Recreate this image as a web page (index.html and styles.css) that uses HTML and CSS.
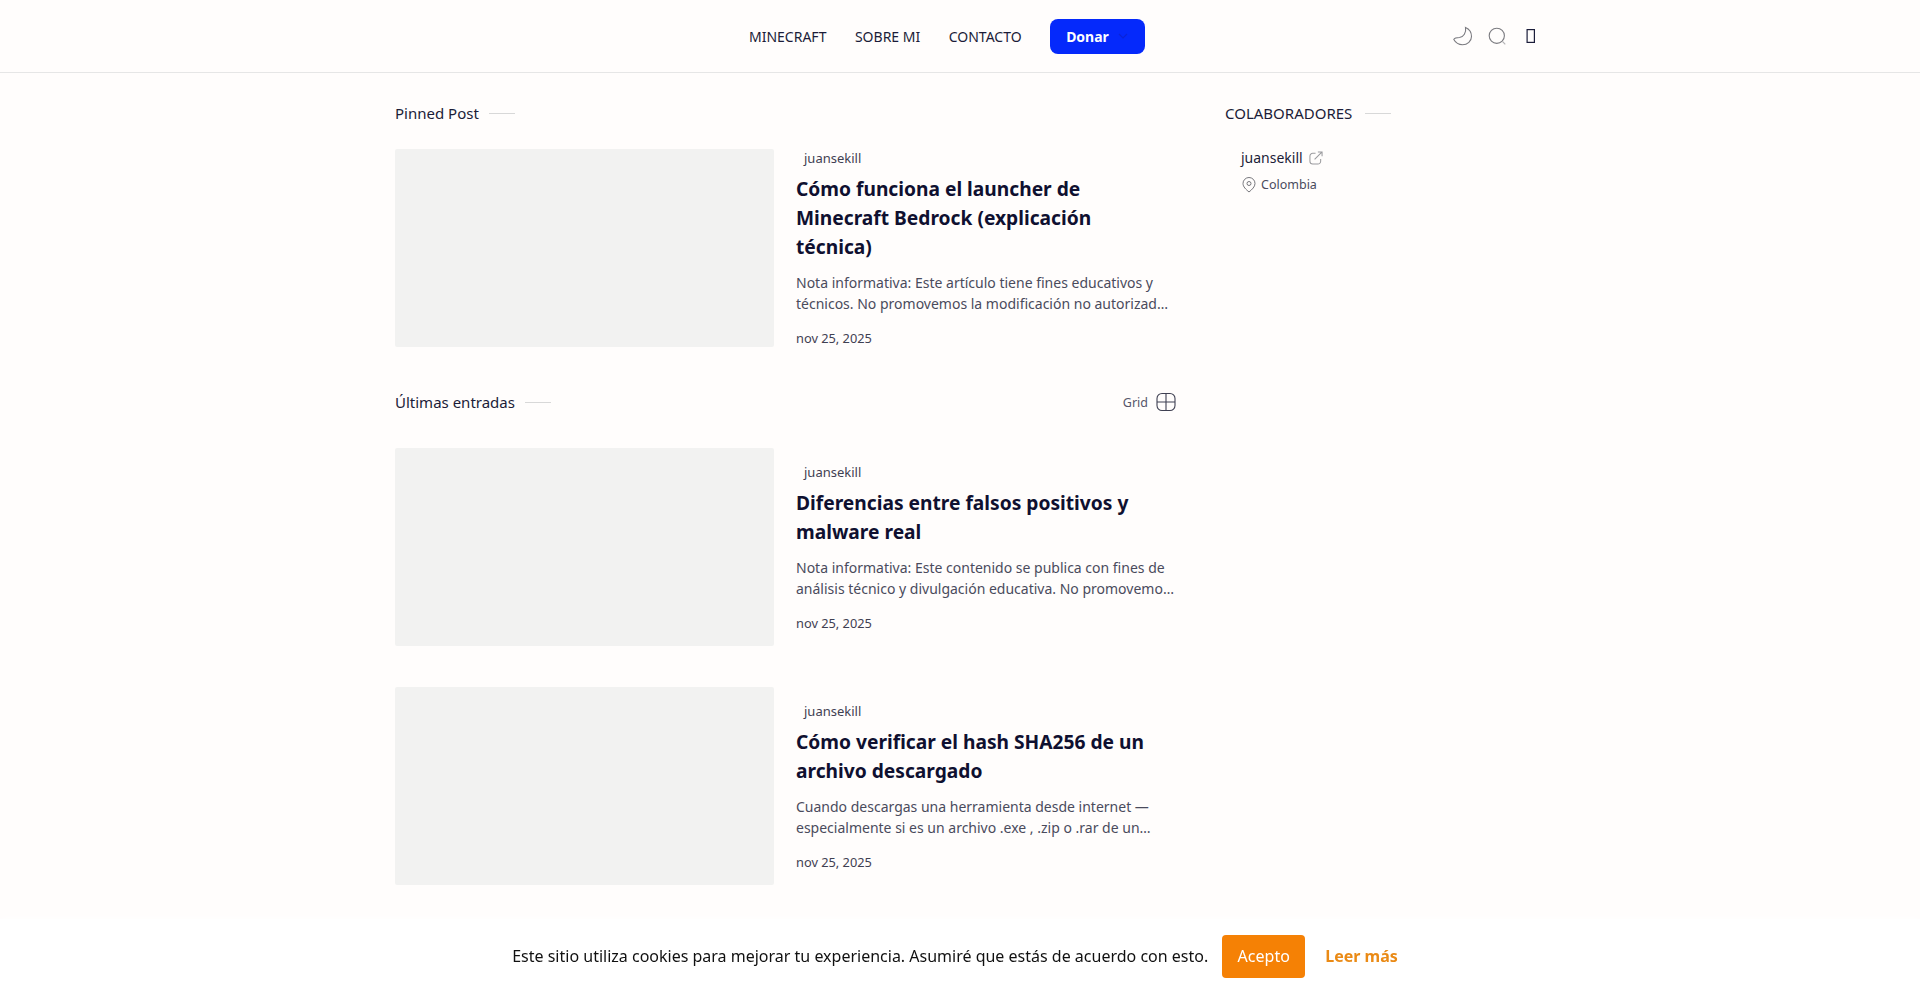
FILE: index.html
```html
<!DOCTYPE html>
<html lang="es">
<head>
  <meta charset="UTF-8">
  <meta name="viewport" content="width=device-width, initial-scale=1.0">
  <title>Juansekill</title>
  <link rel="stylesheet" href="styles.css">
</head>
<body>
  <header class="topbar">
    <nav class="nav">
      <a class="nav-link" href="#">MINECRAFT</a>
      <a class="nav-link" href="#">SOBRE MI</a>
      <a class="nav-link" href="#">CONTACTO</a>
      <a class="donate" href="#">Donar
        <svg class="donate-arrow" width="12" height="12" viewBox="0 0 12 12" fill="none" stroke="#0a23d8" stroke-width="1.2"><path d="M2 4l4 4 4-4"/></svg>
      </a>
    </nav>
    <div class="tools">
      <svg class="tool" width="20" height="20" viewBox="0 0 20 20" fill="none" stroke="#7b7b80" stroke-width="1.1"><path d="M12.500 1.500C16 3 18.500 6.500 18.500 10.500 18.500 15 14.500 18.700 9.500 18.700 6 18.700 2.500 16.500.8 13.500 1.500 12 4 11.500 6.500 11.500 10.500 11 13.500 6.500 12.500 1.500z"/></svg>
      <svg class="tool" width="20" height="20" viewBox="0 0 20 20" fill="none" stroke="#7b7b80" stroke-width="1.1"><circle cx="9.800" cy="9.800" r="7.600"/><path d="M15.500 15.500l2.800 2.800" stroke="#b4b4b6"/></svg>
      <svg class="tool" width="20" height="20" viewBox="0 0 20 20" fill="none" stroke="#1b1d3a" stroke-width="1.200"><rect x="6.100" y="3.600" width="7.300" height="12.800"/></svg>
    </div>
  </header>

  <div class="page">
    <main class="main">
      <div class="section-head">
        <h2 class="section-title">Pinned Post</h2>
      </div>
      <article class="post post-pinned">
        <div class="thumb"></div>
        <div class="post-body">
          <span class="author">juansekill</span>
          <h3 class="post-title">Cómo funciona el launcher de Minecraft Bedrock (explicación técnica)</h3>
          <p class="excerpt">Nota informativa: Este artículo tiene fines educativos y técnicos. No promovemos la modificación no autorizad…</p>
          <span class="date">nov 25, 2025</span>
        </div>
      </article>

      <div class="section-head section-latest">
        <h2 class="section-title">Últimas entradas</h2>
        <div class="view-toggle">
          <span>Grid</span>
          <svg width="20" height="20" viewBox="0 0 20 20" fill="none" stroke="#3f4052" stroke-width="1.100"><rect x="1" y="1.500" width="18" height="17" rx="5"/><path d="M10 1.500v17M1 10h18"/></svg>
        </div>
      </div>

      <article class="post">
        <div class="thumb"></div>
        <div class="post-body">
          <span class="author">juansekill</span>
          <h3 class="post-title">Diferencias entre falsos positivos y malware real</h3>
          <p class="excerpt">Nota informativa: Este contenido se publica con fines de análisis técnico y divulgación educativa. No promovemo…</p>
          <span class="date">nov 25, 2025</span>
        </div>
      </article>

      <article class="post">
        <div class="thumb"></div>
        <div class="post-body">
          <span class="author">juansekill</span>
          <h3 class="post-title">Cómo verificar el hash SHA256 de un archivo descargado</h3>
          <p class="excerpt">Cuando descargas una herramienta desde internet — especialmente si es un archivo .exe , .zip o .rar de un…</p>
          <span class="date">nov 25, 2025</span>
        </div>
      </article>
    </main>

    <aside class="sidebar">
      <div class="section-head">
        <h2 class="section-title side-title">COLABORADORES</h2>
      </div>
      <div class="collab">
        <div class="collab-name">
          <span>juansekill</span>
          <svg width="14" height="14" viewBox="0 0 15 15" fill="none" stroke="#9a9a9d" stroke-width="1.100"><path d="M7 2.500H4a3 3 0 0 0-3 3v5.500a3 3 0 0 0 3 3h5.500a3 3 0 0 0 3-3V8.500"/><path d="M6 9l8-8M9.500 1H14v4.500"/></svg>
        </div>
        <div class="collab-place">
          <svg width="14" height="16" viewBox="0 0 14 16" fill="none" stroke="#77777c" stroke-width="1"><path d="M7 15C4 12.500 1 9.800 1 6.500a6 6 0 0 1 12 0C13 9.800 10 12.500 7 15z"/><circle cx="7" cy="6.500" r="2"/></svg>
          <span>Colombia</span>
        </div>
      </div>
    </aside>
  </div>

  <div class="cookies">
    <span>Este sitio utiliza cookies para mejorar tu experiencia. Asumiré que estás de acuerdo con esto.</span>
    <button class="cookies-ok">Acepto</button>
    <a class="cookies-more" href="#">Leer más</a>
  </div>
</body>
</html>
```

FILE: styles.css
```css
body {
  margin: 0;
  background-color: #fffdfc;
  color: #0f1030;
  font-family: "Noto Sans", Arial, sans-serif;
  height: 993px;
  overflow: hidden;
}
a {
  text-decoration: none;
  color: inherit;
}

/* cabecera */
.topbar {
  height: 72px;
  border-bottom: 1px solid #e6e6e6;
  position: relative;
  display: flex;
  align-items: center;
  padding-left: 749px;
  padding-right: 379px;
}
.nav {
  display: flex;
  align-items: center;
  gap: 28.5px;
}
.nav-link {
  font-size: 14px;
  color: #1b1c38;
}
.donate {
  width: 95px;
  height: 35px;
  box-sizing: border-box;
  padding-left: 16px;
  display: flex;
  align-items: center;
  gap: 8px;
  background-color: #0529fb;
  color: white;
  font-size: 14px;
  font-weight: 700;
  border-radius: 8px;
}
.tools {
  margin-left: auto;
  display: flex;
  align-items: center;
  gap: 14px;
}

/* cuerpo */
.page {
  display: flex;
  padding-left: 395px;
  padding-top: 28px;
}
.main {
  width: 781px;
}
.sidebar {
  margin-left: 49px;
  width: 250px;
}
.section-head {
  display: flex;
  align-items: center;
  justify-content: space-between;
  height: 24px;
}
.section-title {
  margin: 0;
  font-size: 15px;
  font-weight: 400;
  color: #1b1c38;
  display: flex;
  align-items: center;
  gap: 10px;
}
.section-title::after {
  content: "";
  width: 26px;
  height: 1px;
  background-color: #d8d8d8;
}
.side-title {
  gap: 13px;
}
.section-latest {
  margin-top: 43px;
  margin-bottom: 34px;
}
.view-toggle {
  display: flex;
  align-items: center;
  gap: 8px;
  font-size: 12.5px;
  color: #55566a;
}

/* entradas */
.post {
  display: flex;
  gap: 22px;
  height: 198px;
  margin-bottom: 41px;
}
.post-pinned {
  margin-top: 24px;
  margin-bottom: 0;
}
.thumb {
  width: 379px;
  height: 198px;
  flex: none;
  background-color: #f2f2f1;
  border-radius: 2px;
}
.post-body {
  flex: 1;
  min-width: 0;
  display: flex;
  flex-direction: column;
  align-items: flex-start;
  justify-content: center;
}
.author {
  font-size: 13px;
  color: #3f4052;
  margin-left: 8px;
}
.post-title {
  margin: 7px 0 0;
  font-size: 19.2px;
  line-height: 29px;
  font-weight: 700;
  color: #0f1030;
  max-width: 360px;
}
.excerpt {
  margin: 11px 0 0;
  font-size: 14px;
  line-height: 21px;
  color: #4a4b5c;
}
.date {
  margin-top: 15px;
  font-size: 12.8px;
  color: #3f4052;
}

/* lateral */
.collab {
  margin-top: 23px;
  padding-left: 16px;
}
.collab-name {
  display: flex;
  align-items: center;
  gap: 6px;
  font-size: 14px;
  color: #1b1c38;
}
.collab-place {
  margin-top: 9px;
  display: flex;
  align-items: center;
  gap: 5px;
  padding-left: 1px;
  font-size: 12.5px;
  color: #4a4b5c;
}

/* aviso de cookies */
.cookies {
  position: fixed;
  left: 0;
  right: 0;
  bottom: 0;
  height: 74px;
  box-sizing: border-box;
  padding-right: 10px;
  background-color: white;
  box-shadow: 0 0 8px white;
  display: flex;
  align-items: center;
  justify-content: center;
  gap: 14px;
  font-size: 16px;
  color: #111;
}
.cookies-ok {
  width: 83px;
  height: 43px;
  border: none;
  border-radius: 4px;
  background-color: #f58105;
  color: white;
  font-family: inherit;
  font-size: 16px;
}
.cookies-more {
  margin-left: 6px;
  font-weight: 700;
  color: #ea8a15;
}
```
